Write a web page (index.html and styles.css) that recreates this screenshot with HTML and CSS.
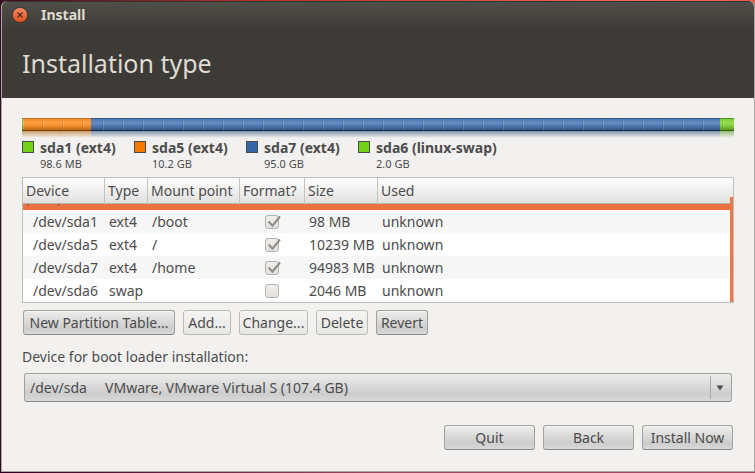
FILE: index.html
```html
<!DOCTYPE html>
<html lang="en">
<head>
<meta charset="utf-8">
<title>Install</title>
<link rel="stylesheet" href="styles.css">
</head>
<body>
<div class="window">
  <header class="top">
    <div class="titlebar">
      <button class="close" type="button" aria-label="Close">
        <svg viewBox="0 0 16 16" width="16" height="16">
          <defs><linearGradient id="closeFill" x1="0" y1="0" x2="0" y2="1"><stop offset="0" stop-color="#f58a63"/><stop offset="1" stop-color="#e04f1c"/></linearGradient></defs>
          <circle cx="8" cy="8" r="7.6" fill="url(#closeFill)" stroke="#33302b" stroke-width="0.8"/>
          <path d="M5.5 5.5l5 5M10.5 5.5l-5 5" stroke="#4b2b1e" stroke-width="1.2" fill="none"/>
        </svg>
      </button>
      <span class="title">Install</span>
    </div>
    <h1>Installation type</h1>
  </header>
  <main>
    <div class="disk">
      <div class="part green" style="width:0.14%"></div>
      <div class="part orange" style="width:9.55%"></div>
      <div class="part blue" style="width:88.34%"></div>
      <div class="part green" style="width:1.97%"></div>
    </div>
    <ul class="legend">
      <li><i class="swatch green"></i><div><b>sda1 (ext4)</b><small>98.6 MB</small></div></li>
      <li><i class="swatch orange"></i><div><b>sda5 (ext4)</b><small>10.2 GB</small></div></li>
      <li><i class="swatch blue"></i><div><b>sda7 (ext4)</b><small>95.0 GB</small></div></li>
      <li><i class="swatch green"></i><div><b>sda6 (linux-swap)</b><small>2.0 GB</small></div></li>
    </ul>
    <div class="tree">
      <table>
        <colgroup><col class="c-device"><col class="c-type"><col class="c-mount"><col class="c-format"><col class="c-size"><col></colgroup>
        <thead>
          <tr><th>Device</th><th>Type</th><th>Mount point</th><th>Format?</th><th>Size</th><th>Used</th></tr>
        </thead>
        <tbody>
          <tr class="selected"><td colspan="6"><div class="clip">/dev/sda</div></td></tr>
          <tr><td>/dev/sda1</td><td>ext4</td><td>/boot</td><td><label class="check"><input type="checkbox" checked disabled aria-label="Format sda1"><svg viewBox="0 0 18 16"><path d="M4.5 7.5l4 4.2L16 2.5"/></svg></label></td><td>98 MB</td><td>unknown</td></tr>
          <tr><td>/dev/sda5</td><td>ext4</td><td>/</td><td><label class="check"><input type="checkbox" checked disabled aria-label="Format sda5"><svg viewBox="0 0 18 16"><path d="M4.5 7.5l4 4.2L16 2.5"/></svg></label></td><td>10239 MB</td><td>unknown</td></tr>
          <tr><td>/dev/sda7</td><td>ext4</td><td>/home</td><td><label class="check"><input type="checkbox" checked disabled aria-label="Format sda7"><svg viewBox="0 0 18 16"><path d="M4.5 7.5l4 4.2L16 2.5"/></svg></label></td><td>94983 MB</td><td>unknown</td></tr>
          <tr><td>/dev/sda6</td><td>swap</td><td></td><td><label class="check"><input type="checkbox" disabled aria-label="Format sda6"></label></td><td>2046 MB</td><td>unknown</td></tr>
        </tbody>
      </table>
      <div class="scrollbar"></div>
    </div>
    <div class="actions">
      <button class="btn w-table" type="button">New Partition Table...</button>
      <button class="btn flat w-add" type="button">Add...</button>
      <button class="btn flat w-change" type="button">Change...</button>
      <button class="btn flat w-small" type="button">Delete</button>
      <button class="btn w-small" type="button">Revert</button>
    </div>
    <label class="boot-label" for="boot">Device for boot loader installation:</label>
    <div class="combo">
      <select id="boot"><option>/dev/sda&nbsp;&nbsp;&nbsp;&nbsp; VMware, VMware Virtual S (107.4 GB)</option></select>
      <svg class="arrow" viewBox="0 0 8 6" width="8" height="6"><path d="M0.5 0.5h7L4 5.5z"/></svg>
    </div>
    <div class="nav">
      <button class="btn" type="button">Quit</button>
      <button class="btn" type="button">Back</button>
      <button class="btn" type="button">Install Now</button>
    </div>
  </main>
</div>
</body>
</html>
```
FILE: styles.css
```css
* { box-sizing: border-box; }

body {
  margin: 0;
  min-height: 100vh;
  padding: 1px 0 1px 1px;
  display: flex;
  font-family: "Noto Sans", "Open Sans", sans-serif;
  font-size: 14px;
  line-height: 20px;
  color: #4c4c4c;
  background:
    linear-gradient(90deg, #2c001e 0, #98495f 50%, #a04a62) bottom / 100% 2px no-repeat,
    linear-gradient(90deg, #3a0d20, #b0332e 33%, #ee6f55 85%, #e06050) top / 100% 12px no-repeat,
    #2f0a20;
}

.window {
  flex: 1;
  display: flex;
  flex-direction: column;
  background: #f2f1f0;
  border: 1px solid #aaa7a2;
  border-top: 0;
  border-radius: 6px 6px 0 0;
  overflow: hidden;
}

.top {
  height: 97px;
  margin: 0 -1px;
  padding-left: 1px;
  background: linear-gradient(#4f4e48, #3c3b37 28px);
  border-top: 1px solid #33322e;
  color: #dfdbd2;
}

.titlebar {
  display: flex;
  align-items: center;
  gap: 13px;
  height: 26px;
  padding-left: 10px;
}

.close {
  display: flex;
  padding: 0;
  border: 0;
  background: none;
}

.title { font-weight: bold; }

h1 {
  margin: 19px 0 0 20px;
  font-size: 25px;
  line-height: 32px;
  font-weight: 400;
}

main {
  display: flex;
  flex-direction: column;
  padding: 21px 20px 0;
  margin-top: -1px;
}

.disk {
  display: flex;
  height: 20px;
  position: relative;
}

/* tick marks every 20px over the coloured strip */
.disk::after {
  content: "";
  position: absolute;
  inset: 1px 0 8px;
  background: linear-gradient(90deg, #00000018 1px, #ffffff28 1px 2px, transparent 2px) 20px 0 / 20px 100%;
}

.part::before,
.part::after {
  content: "";
  display: block;
}

.part::before {
  height: 13px;
  background: linear-gradient(var(--edge) 1px, var(--mid) 1px, var(--light) 5px, var(--mid) 8px, var(--low) 12px, var(--dark) 12px);
}

.part::after {
  height: 7px;
  background: linear-gradient(var(--low), transparent);
  opacity: .6;
}

.green { --edge: #4f9a1c; --mid: #7fcb3b; --light: #95e04c; --low: #59961f; --dark: #2f6500; --solid: #73d216; }
.orange { --edge: #c77521; --mid: #f08c2c; --light: #ff9e43; --low: #b96612; --dark: #7a3d00; --solid: #f57900; }
.blue { --edge: #305684; --mid: #4f78ae; --light: #688fc0; --low: #34557f; --dark: #152d4d; --solid: #3465a4; }

.legend {
  display: flex;
  gap: 16px;
  margin: 0;
  padding: 0;
  list-style: none;
}

.legend li {
  display: flex;
  gap: 6px;
  min-width: 96px;
}

.legend b,
.legend small {
  display: block;
  white-space: nowrap;
}

.legend b { line-height: 20px; }

.legend small {
  font-size: 11px;
  line-height: 12px;
}

.swatch {
  width: 12px;
  height: 12px;
  margin-top: 3px;
  background: var(--solid);
  border: 1px solid #4b4b4b;
}

.tree {
  position: relative;
  margin-top: 7px;
  border: 1px solid #bfbebb;
  background: #fff;
}

table {
  width: 100%;
  table-layout: fixed;
  border-collapse: separate;
  border-spacing: 0;
}

.c-device { width: 82px; }
.c-type { width: 43px; }
.c-mount { width: 92px; }
.c-format { width: 65px; }
.c-size { width: 73px; }

th {
  height: 26px;
  padding: 0 3px;
  text-align: left;
  font-weight: 400;
  white-space: nowrap;
  background: linear-gradient(#fff, #e1e0df);
  border-right: 1px solid #c3c2c0;
  border-bottom: 1px solid #b5b3b0;
}

th:last-child { border-right: 0; }

td {
  height: 23px;
  padding: 0 4px;
  white-space: nowrap;
}

td:first-child { padding-left: 10px; }

tbody tr:nth-child(even) { background: #f7f7f7; }

.selected td {
  height: 6px;
  padding: 0;
  background: #ec7140;
}

.selected td:first-child { padding-left: 4px; }

/* row scrolled almost out of view under the header */
.clip {
  display: flex;
  align-items: flex-end;
  height: 6px;
  padding-bottom: 1px;
  overflow: hidden;
  font-family: "DejaVu Sans", sans-serif;
}

.check {
  display: block;
  position: relative;
  width: 14px;
  height: 14px;
  margin-left: 21px;
}

.check input {
  appearance: none;
  display: block;
  width: 14px;
  height: 14px;
  margin: 0;
  border: 1px solid #b5b2ae;
  border-radius: 3px;
  background: linear-gradient(#efeeed, #e3e1df);
}

.check svg {
  position: absolute;
  left: -1px;
  top: -1px;
  width: 18px;
  height: 16px;
}

.check path {
  fill: none;
  stroke: #8f8d89;
  stroke-width: 2;
}

.scrollbar {
  position: absolute;
  top: 19px;
  right: 0;
  bottom: 0;
  width: 3px;
  background: #f07746;
}

.actions {
  display: flex;
  gap: 8px;
  margin: 7px 1px 0;
}

.btn {
  height: 25px;
  padding: 0;
  font: inherit;
  color: inherit;
  white-space: nowrap;
  border: 1px solid #a3a19e;
  border-bottom-color: #8b8987;
  border-radius: 3px;
  background: linear-gradient(#ededec, #cdcdcd 75%, #d9d9d9);
  box-shadow: inset 0 1px #f5f5f5;
}

.flat {
  border-color: #bdbbb8;
  background: linear-gradient(#f4f4f3, #e8e7e6);
}

.w-table { width: 152px; }
.w-add { width: 48px; }
.w-change { width: 69px; }
.w-small { width: 52px; }

.boot-label { margin-top: 12px; }

.combo {
  position: relative;
  margin: 6px 2px 0;
}

select {
  display: block;
  appearance: none;
  width: 100%;
  height: 29px;
  padding: 0 30px 0 5px;
  font: inherit;
  color: inherit;
  border: 1px solid #a3a19e;
  border-bottom-color: #8b8987;
  border-radius: 3px;
  background:
    linear-gradient(#aaa, #aaa) right 20px center / 1px 23px no-repeat,
    linear-gradient(#ececeb, #cdcdcd 75%, #d9d9d9);
}

.arrow {
  position: absolute;
  right: 8px;
  top: 12px;
  fill: #4c4c4c;
  pointer-events: none;
}

.nav {
  display: flex;
  justify-content: flex-end;
  gap: 8px;
  margin: 23px 1px 20px;
}

.nav .btn { width: 91px; }
```
